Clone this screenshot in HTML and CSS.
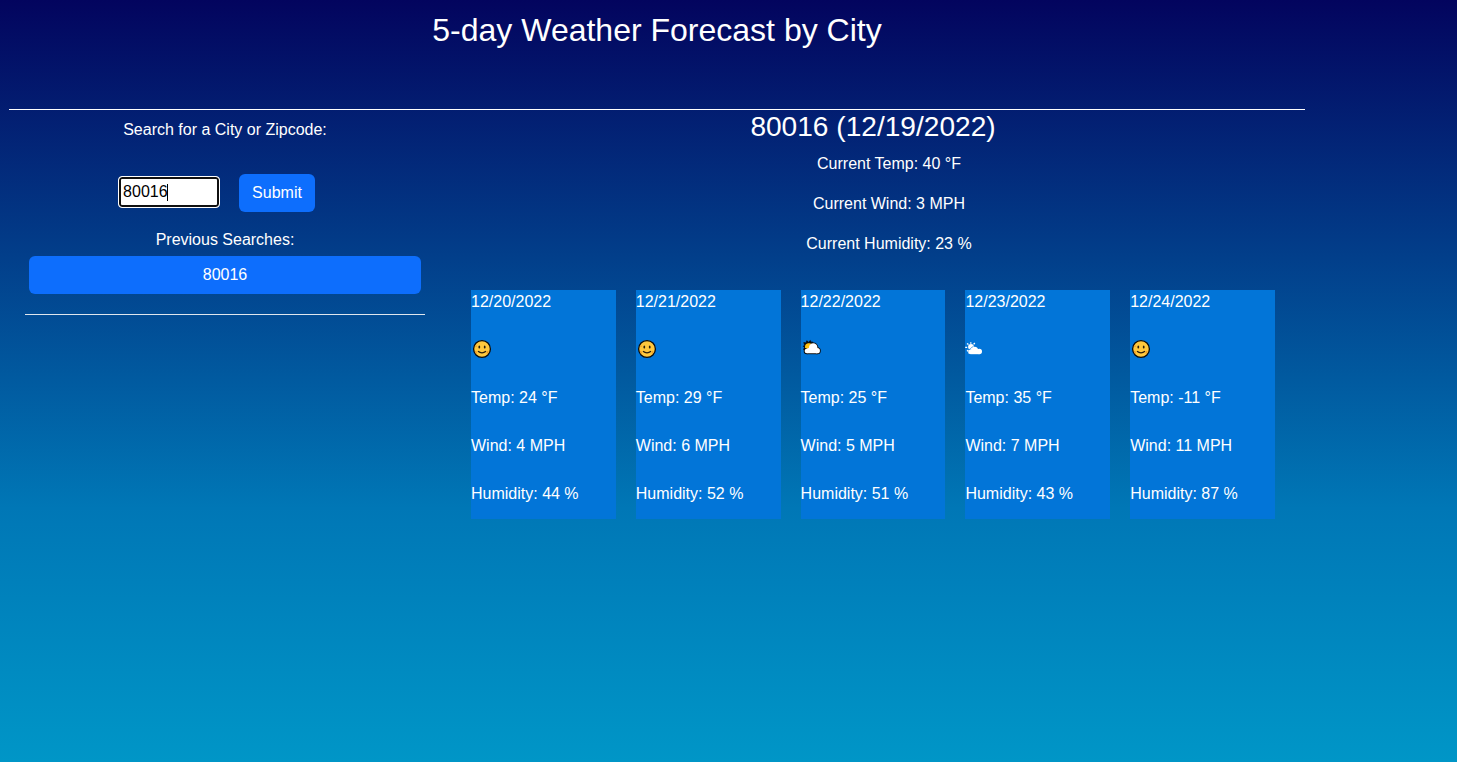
FILE: index.html
```html
<!DOCTYPE html>
<html lang="en">
<head>
<meta charset="utf-8">
<title>5-day Weather Forecast by City</title>
<link rel="stylesheet" href="styles.css">
</head>
<body>
<svg width="0" height="0" class="defs" aria-hidden="true">
  <symbol id="smile" viewBox="0 0 20 20">
    <circle cx="10" cy="10" r="8.4" fill="#ffc83d" stroke="#0b0b0b" stroke-width="1.3"/>
    <path d="M4 6.5V8M3.5 12l1 2.5M16 12l-1 2.5" stroke="#f29d26" stroke-width="1.4"/>
    <ellipse cx="7.3" cy="8" rx=".9" ry="1.5" fill="#2b1d0a"/>
    <ellipse cx="12.7" cy="8" rx=".9" ry="1.5" fill="#2b1d0a"/>
    <path d="M6 12.3q4 3 8 0" fill="none" stroke="#2b1d0a" stroke-width="1.3"/>
  </symbol>
  <symbol id="sun-cloud" viewBox="0 0 20 20">
    <path d="M2.6 10.6 3.4 8.6 2.2 7.3 3.6 6.2 2.8 3.6 5.2 4.1 5.8 1.8 7.6 3.2 9.3 1.6 10.2 3.2 12 3.2 6 12z" fill="#0b0b0b" stroke="#0b0b0b" stroke-width=".8"/>
    <circle cx="7.7" cy="8" r="3.7" fill="#ffc20e"/>
    <g fill="#0b0b0b">
      <circle cx="12.2" cy="8.5" r="5.1"/><circle cx="5.9" cy="12" r="3.2"/><circle cx="16.3" cy="11.7" r="3.5"/>
      <path d="M5.9 10h10.4v5.2H5.9z"/>
    </g>
    <path d="M4.3 8.8C4.5 6 7 4.2 10 4.6L9 8.5 6.4 10z" fill="#ffc20e"/>
    <g fill="#fff">
      <circle cx="12.2" cy="8.5" r="4.2"/><circle cx="5.9" cy="12" r="2.3"/><circle cx="16.3" cy="11.7" r="2.6"/>
      <path d="M5.9 9.7 9 8.3h5l2.3 1.4v4.6H5.9z"/>
    </g>
  </symbol>
  <symbol id="white-cloud" viewBox="0 0 20 20">
    <circle cx="6" cy="7.8" r="2.9" fill="#fff"/>
    <path d="M5.8 3.2v1.6M2 4.4l1.5 1.2M.2 8.3h2M2 12.2l1.4-1.2M9.8 4 8.6 5.4" stroke="#fff" stroke-width="1.3"/>
    <g fill="#fff">
      <circle cx="5.3" cy="12.9" r="2.2"/><circle cx="9.6" cy="11.2" r="3.5"/><circle cx="14.3" cy="12.5" r="2.7"/>
      <path d="M5.3 11h9v4.2h-9z"/>
    </g>
    <path d="M3.8 10.7C5.6 10.2 5.8 8.3 8.4 7.5" fill="none" stroke="#0275d8" stroke-width=".6"/>
  </symbol>
</svg>
<main class="page">
  <header class="header"><h1 class="title">5-day Weather Forecast by City</h1></header>
  <div class="columns">
    <aside class="sidebar">
      <p class="label">Search for a City or Zipcode:</p>
      <div class="form">
        <div class="input">80016<span class="caret"></span></div>
        <button class="button">Submit</button>
      </div>
      <p class="label">Previous Searches:</p>
      <button class="button previous">80016</button>
    </aside>
    <section class="weather">
      <h2 class="city">80016 (12/19/2022)</h2>
      <div class="current">
        <p>Current Temp: 40 °F</p>
        <p>Current Wind: 3 MPH</p>
        <p>Current Humidity: 23 %</p>
      </div>
      <div class="forecast">
        <article class="card"><p>12/20/2022</p><svg class="icon"><use href="#smile"/></svg><p>Temp: 24 °F</p><p>Wind: 4 MPH</p><p>Humidity: 44 %</p></article>
        <article class="card"><p>12/21/2022</p><svg class="icon"><use href="#smile"/></svg><p>Temp: 29 °F</p><p>Wind: 6 MPH</p><p>Humidity: 52 %</p></article>
        <article class="card"><p>12/22/2022</p><svg class="icon cloud"><use href="#sun-cloud"/></svg><p>Temp: 25 °F</p><p>Wind: 5 MPH</p><p>Humidity: 51 %</p></article>
        <article class="card"><p>12/23/2022</p><svg class="icon cloud"><use href="#white-cloud"/></svg><p>Temp: 35 °F</p><p>Wind: 7 MPH</p><p>Humidity: 43 %</p></article>
        <article class="card"><p>12/24/2022</p><svg class="icon"><use href="#smile"/></svg><p>Temp: -11 °F</p><p>Wind: 11 MPH</p><p>Humidity: 87 %</p></article>
      </div>
    </section>
  </div>
</main>
</body>
</html>
```
FILE: styles.css
```css
* { box-sizing: border-box; }
body {
  margin: 0;
  min-height: 100vh;
  background: linear-gradient(#03045e, #023e8a, #0077b6, #0096c7);
  color: #fff;
  font: 16px/24px "Liberation Sans", Arial, sans-serif;
}
p, h1, h2 { margin: 0; font-weight: 400; }
.defs { display: block; }
.page { width: 1296px; margin-left: 9px; }
.header {
  height: 110px;
  padding-top: 11px;
  border-bottom: 1px solid #fff;
  text-align: center;
}
.title { font-size: 32px; line-height: 38px; }
.columns { display: flex; }
.sidebar {
  width: 400px;
  height: 205px;
  margin-left: 16px;
  padding: 8px 4px 0;
  border-bottom: 1px solid #dfe6ee;
  text-align: center;
}
.form {
  display: flex;
  justify-content: center;
  align-items: flex-start;
  gap: 19px;
  margin: 32px 17px 16px 0;
}
.input {
  display: flex;
  align-items: center;
  width: 102px;
  height: 32px;
  margin-top: 2px;
  padding: 0 2px 0 4px;
  border: 1px solid #fff;
  border-radius: 4px;
  box-shadow: inset 0 0 0 2px #101010;
  background: #fff;
  color: #000;
}
.caret { width: 1px; height: 17px; margin-left: -1px; background: #000; }
.button {
  height: 38px;
  padding: 0 13px;
  border: 0;
  border-radius: 6px;
  background: #0d6efd;
  color: #fff;
  font: inherit;
}
.previous { display: block; width: 100%; margin-top: 4px; }
.weather { width: 804px; margin-left: 46px; }
.city {
  font-size: 28.1px;
  line-height: 34px;
  text-align: center;
}
.current {
  display: grid;
  gap: 16px;
  margin-top: 8px;
  padding-left: 32px;
  text-align: center;
}
.forecast {
  display: grid;
  grid-template-columns: repeat(5, 1fr);
  gap: 20px;
  margin-top: 34px;
}
.card {
  display: flex;
  flex-direction: column;
  gap: 24px;
  height: 229px;
  background: #0275d8;
}
.icon { flex: none; width: 20px; height: 20px; margin: 1px 0 3px 1px; }
.cloud { margin-left: 0; }
```
